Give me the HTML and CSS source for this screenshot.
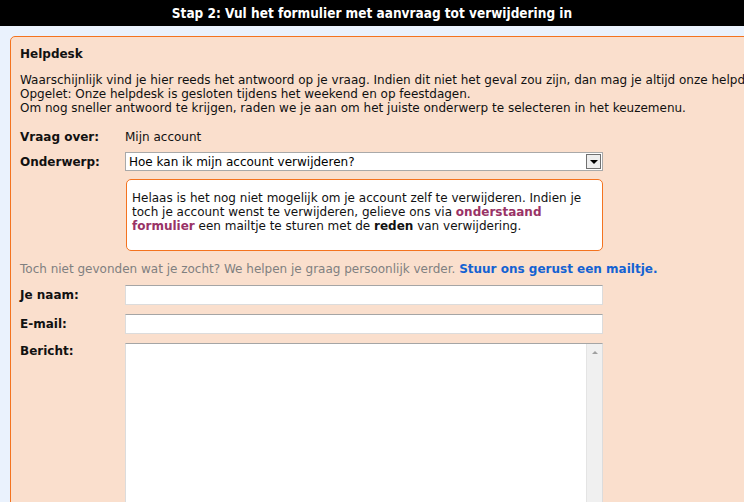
FILE: index.html
```html
<!DOCTYPE html>
<html lang="nl">
<head>
<meta charset="utf-8">
<title>Stap 2</title>
<link rel="stylesheet" href="styles.css">
</head>
<body>
<div class="topbar">Stap 2: Vul het formulier met aanvraag tot verwijdering in</div>
<div class="panel">
  <h2 class="title">Helpdesk</h2>
  <p class="intro">Waarschijnlijk vind je hier reeds het antwoord op je vraag. Indien dit niet het geval zou zijn, dan mag je altijd onze helpdesk contacteren.<br>Opgelet: Onze helpdesk is gesloten tijdens het weekend en op feestdagen.<br>Om nog sneller antwoord te krijgen, raden we je aan om het juiste onderwerp te selecteren in het keuzemenu.</p>
  <div class="row row-about">
    <span class="label">Vraag over:</span>
    <span class="value">Mijn account</span>
  </div>
  <div class="row row-subject">
    <span class="label">Onderwerp:</span>
    <div class="select">
      <span class="select-text">Hoe kan ik mijn account verwijderen?</span>
      <span class="select-btn"><span class="arrow-down"></span></span>
    </div>
  </div>
  <div class="row row-info">
    <span class="label"></span>
    <div class="info">Helaas is het nog niet mogelijk om je account zelf te verwijderen. Indien je toch je account wenst te verwijderen, gelieve ons via <a class="plink" href="#">onderstaand formulier</a> een mailtje te sturen met de <b>reden</b> van verwijdering.</div>
  </div>
  <p class="notfound">Toch niet gevonden wat je zocht? We helpen je graag persoonlijk verder. <a class="blink" href="#">Stuur ons gerust een mailtje.</a></p>
  <div class="row row-field">
    <span class="label">Je naam:</span>
    <div class="input"></div>
  </div>
  <div class="row row-field">
    <span class="label">E-mail:</span>
    <div class="input"></div>
  </div>
  <div class="row row-field row-message">
    <span class="label">Bericht:</span>
    <div class="textarea">
      <div class="ta-body"></div>
      <div class="ta-scroll"><span class="arrow-up"></span></div>
    </div>
  </div>
</div>
</body>
</html>
```
FILE: styles.css
```css
html, body {
  margin: 0;
  padding: 0;
}
body {
  background: #eaf2fd;
  font-family: "DejaVu Sans", Verdana, sans-serif;
  font-size: 12px;
  line-height: 14px;
  color: #111;
  overflow: hidden;
  width: 744px;
  height: 502px;
}
.topbar {
  height: 26px;
  line-height: 26px;
  background: #000;
  color: #fff;
  text-align: center;
  font-family: "DejaVu Sans Condensed", "DejaVu Sans", sans-serif;
  font-weight: bold;
  font-size: 13.5px;
}
.panel {
  margin: 10px 0 0 10px;
  width: 800px;
  height: 600px;
  box-sizing: border-box;
  border: 1px solid #f4731f;
  border-radius: 5px;
  background: #fadfcd;
  padding: 10px 9px 0;
  white-space: nowrap;
}
.title {
  margin: 0;
  font-size: 12px;
  font-weight: bold;
  line-height: 14px;
}
.intro {
  margin: 12px 0 0;
}
.row {
  display: flex;
  align-items: center;
}
.label {
  width: 105px;
  flex: none;
  font-weight: bold;
}
.row-about {
  margin-top: 15px;
}
.row-subject {
  margin-top: 8px;
}
.select {
  width: 478px;
  height: 19px;
  box-sizing: border-box;
  border: 1px solid #a9a9a9;
  background: #fff;
  display: flex;
  align-items: center;
  justify-content: space-between;
  font-size: 12px;
}
.select-text {
  padding-left: 3px;
  color: #000;
}
.select-btn {
  width: 15px;
  height: 15px;
  margin-right: 1px;
  box-sizing: border-box;
  border: 1px solid #707070;
  background: #eeeeee;
  display: flex;
  align-items: center;
  justify-content: center;
}
.arrow-down {
  width: 0;
  height: 0;
  border-left: 4px solid transparent;
  border-right: 4px solid transparent;
  border-top: 4px solid #000;
}
.row-info {
  margin-top: 8px;
  align-items: flex-start;
}
.info {
  margin-left: 1px;
  width: 477px;
  box-sizing: border-box;
  background: #fff;
  border: 1px solid #f4731f;
  border-radius: 5px;
  padding: 11px 5px 17px;
  white-space: normal;
  color: #111;
}
.plink {
  color: #993366;
  font-weight: bold;
  text-decoration: none;
}
.notfound {
  margin: 11px 0 0;
  color: #808080;
}
.blink {
  color: #1462d2;
  font-weight: bold;
  text-decoration: none;
}
.row-field {
  margin-top: 9px;
}
.input {
  width: 478px;
  height: 20px;
  box-sizing: border-box;
  background: #fff;
  border: 1px solid #dcdcdc;
  border-top-color: #a5a5a5;
}
.row-message {
  align-items: flex-start;
}
.row-message .label {
  padding-top: 1px;
}
.textarea {
  width: 478px;
  height: 200px;
  box-sizing: border-box;
  background: #fff;
  border: 1px solid #dcdcdc;
  border-top-color: #a5a5a5;
  display: flex;
}
.ta-body {
  flex: 1;
}
.ta-scroll {
  width: 16px;
  flex: none;
  background: #f0f0f0;
  border-left: 1px solid #e4e4e4;
  display: flex;
  justify-content: center;
  padding-top: 7px;
  box-sizing: border-box;
}
.arrow-up {
  width: 0;
  height: 0;
  border-left: 3px solid transparent;
  border-right: 3px solid transparent;
  border-bottom: 3px solid #a0a0a0;
}
```
